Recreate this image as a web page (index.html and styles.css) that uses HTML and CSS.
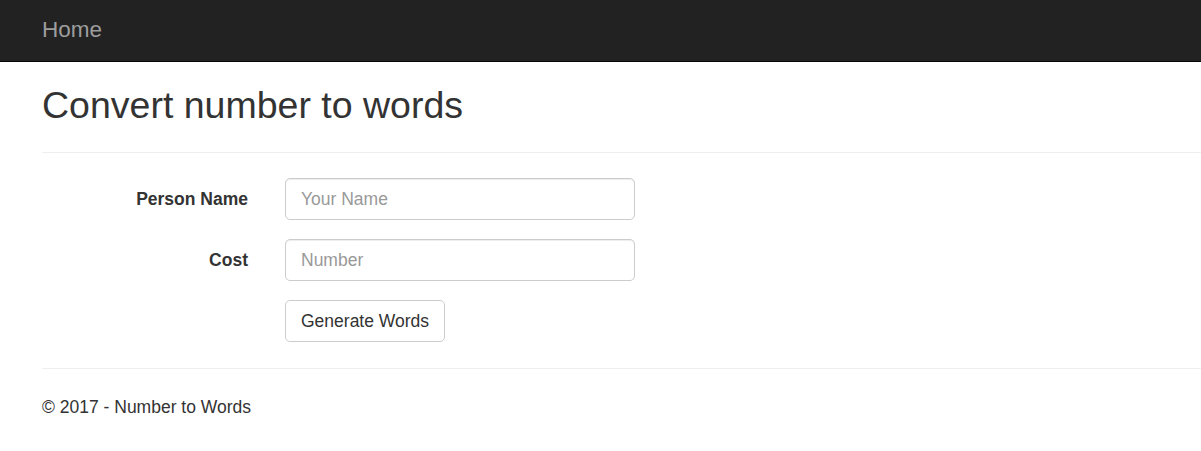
FILE: index.html
```html
<!DOCTYPE html>
<html lang="en">
<head>
<meta charset="utf-8">
<title>Number to Words</title>
<link rel="stylesheet" href="styles.css">
</head>
<body>
<header class="navbar">
  <div class="navbar-inner">
    <a class="brand" href="#">Home</a>
  </div>
</header>
<main class="body-content">
  <h2 class="title">Convert number to words</h2>
  <hr class="rule">
  <form class="form">
    <div class="form-row">
      <label class="control-label" for="name">Person Name</label>
      <input class="form-control" id="name" type="text" placeholder="Your Name">
    </div>
    <div class="form-row">
      <label class="control-label" for="cost">Cost</label>
      <input class="form-control" id="cost" type="text" placeholder="Number">
    </div>
    <div class="form-row last">
      <span></span>
      <div><button class="btn" type="button">Generate Words</button></div>
    </div>
  </form>
  <hr class="rule">
  <footer class="footer">
    <p>© 2017 - Number to Words</p>
  </footer>
</main>
</body>
</html>
```

FILE: styles.css
```css
* { box-sizing: border-box; }
html, body {
  margin: 0;
  padding: 0;
  background: #fff;
  color: #333;
  font-family: "Liberation Sans", Arial, sans-serif;
  font-size: 17.5px;
  line-height: 25px;
}
.navbar {
  background: #222;
  height: 62px;
  border-bottom: 1px solid #080808;
}
.navbar-inner {
  padding-left: 42px;
}
.brand {
  display: inline-block;
  padding: 17px 0;
  font-size: 22.5px;
  line-height: 25px;
  color: #9d9d9d;
  text-decoration: none;
}
.body-content {
  padding-left: 42px;
}
.title {
  margin: 23px 0 0;
  font-size: 37.5px;
  line-height: 41px;
  font-weight: 500;
  color: #333;
}
.rule {
  margin: 26px 0 0;
  border: 0;
  border-top: 1px solid #eee;
  height: 0;
}
.form {
  margin-top: 25px;
}
.form-row {
  display: grid;
  grid-template-columns: 206px 350px;
  column-gap: 37px;
  margin-bottom: 19px;
}
.form-row.last {
  margin-bottom: 0;
}
.control-label {
  text-align: right;
  font-weight: bold;
  padding-top: 8.75px;
  line-height: 25px;
}
.form-control {
  display: block;
  width: 350px;
  height: 42px;
  padding: 7.5px 15px;
  font-family: inherit;
  font-size: 17.5px;
  line-height: 25px;
  color: #555;
  background: #fff;
  border: 1px solid #ccc;
  border-radius: 5px;
  box-shadow: inset 0 1px 1px rgba(0,0,0,.075);
  outline: none;
}
.form-control::placeholder {
  color: #999;
}
.btn {
  display: inline-block;
  height: 42px;
  padding: 7.5px 15px;
  font-family: inherit;
  font-size: 17.5px;
  line-height: 25px;
  color: #333;
  background: #fff;
  border: 1px solid #ccc;
  border-radius: 5px;
  cursor: pointer;
}
.footer p {
  margin: 26px 0 0;
}
```
